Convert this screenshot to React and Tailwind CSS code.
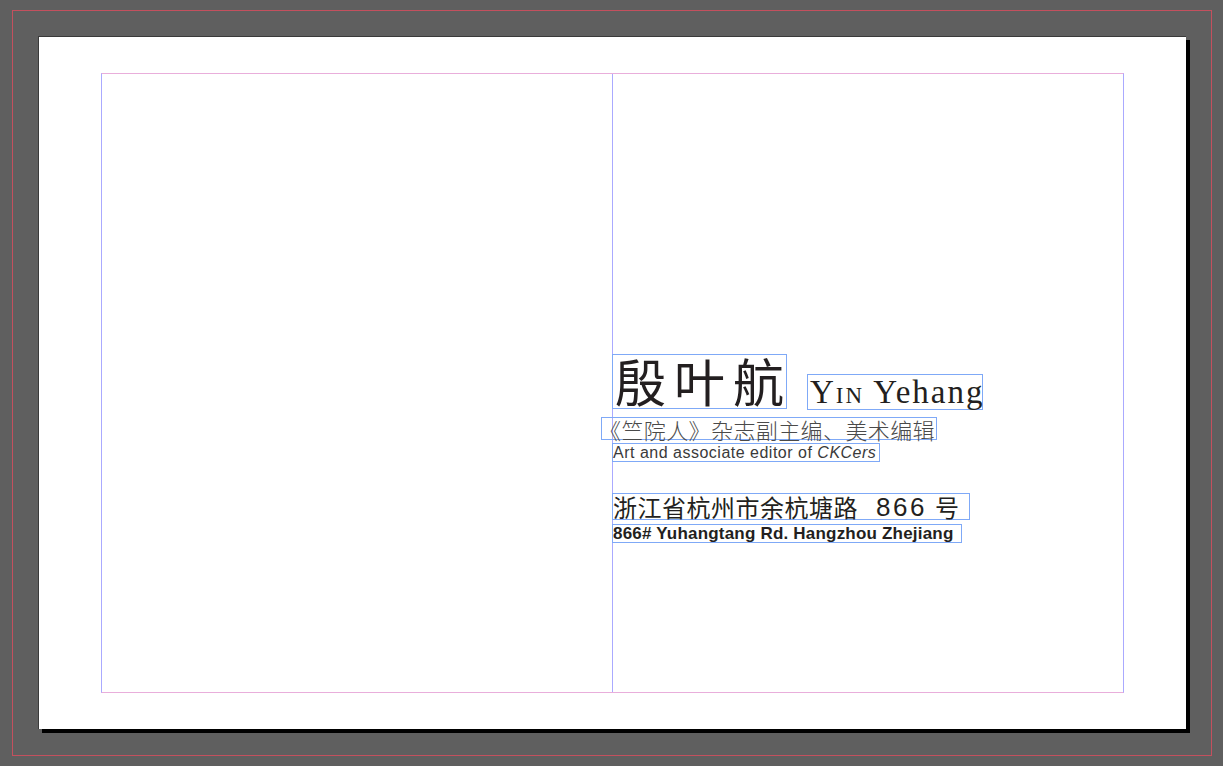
export default function App() {
  const cjk = { fontFamily: '"Noto Sans CJK SC", sans-serif' };
  const serif = { fontFamily: '"Liberation Serif", "Noto Sans CJK SC", serif' };
  const sans = { fontFamily: '"Liberation Sans", "Noto Sans CJK SC", sans-serif' };
  return (
    <div className="w-[1223px] h-[766px] bg-[#5f5f5f] pt-[10px] pl-[12px] overflow-hidden">
      <div className="w-[1200px] h-[746px] border border-[#c4505e] p-[25px] box-border">
        <div className="w-[1148px] h-[693px] bg-white border-l border-t border-[#3a3a3a] shadow-[4px_4px_0_#000] pl-[62px] pt-[36px] box-border">
          <div className="w-[1023px] h-[620px] border-y border-y-[#e9aedb] border-x border-x-[#aaaaff] flex box-border">
            <div className="w-[511px] h-full border-r border-r-[#aaaaff] shrink-0" />
            <div className="flex-1 flex flex-col pt-[280px]">
              <div className="flex items-end ml-[-1px]">
                <div className="w-[175px] h-[55px] border border-[#7fa9f7] box-border flex items-center pl-[2px] pb-[3px]">
                  <span style={cjk} className="text-[51px] leading-none tracking-[8px] text-[#231f20] whitespace-nowrap">殷叶航</span>
                </div>
                <div className="ml-[20px] mb-[-1px] w-[176px] h-[36px] border border-[#7fa9f7] box-border flex items-end pl-[2px]">
                  <span style={serif} className="text-[33px] leading-[33px] text-[#231f20] whitespace-nowrap tracking-[2px]">
                    <span className="[font-variant:small-caps]">Yin</span> Yehang
                  </span>
                </div>
              </div>
              <div className="mt-[8px] ml-[-12px] w-[336px] h-[23px] border border-[#7fa9f7] box-border flex items-center">
                <span style={cjk} className="ml-[-3px] text-[22px] leading-none font-light text-[#4a4a4a] whitespace-nowrap tracking-[0.4px]">《竺院人》杂志副主编、美术编辑</span>
              </div>
              <div className="mt-[3px] ml-[-1px] w-[268px] h-[19px] border border-[#7fa9f7] box-border flex items-center">
                <span style={sans} className="text-[16px] leading-none text-[#3a3a3a] whitespace-nowrap tracking-[0.5px]">
                  Art and associate editor of <i>CKCers</i>
                </span>
              </div>
              <div className="mt-[31px] ml-[-1px] w-[358px] h-[27px] border border-[#7fa9f7] box-border flex items-center">
                <span style={cjk} className="text-[24px] leading-none text-[#231f20] whitespace-nowrap tracking-[0.5px]">浙江省杭州市余杭塘路</span>
                <span style={sans} className="ml-[18px] text-[26px] leading-none text-[#231f20] tracking-[2.5px]">866</span>
                <span style={cjk} className="ml-[8px] text-[24px] leading-none text-[#231f20]">号</span>
              </div>
              <div className="mt-[4px] ml-[-1px] w-[350px] h-[19px] border border-[#7fa9f7] box-border flex items-center">
                <span style={sans} className="text-[17px] leading-none font-bold text-[#231f20] whitespace-nowrap tracking-[0.2px]">
                  866# Yuhangtang Rd. Hangzhou Zhejiang
                </span>
              </div>
            </div>
          </div>
        </div>
      </div>
    </div>
  );
}
